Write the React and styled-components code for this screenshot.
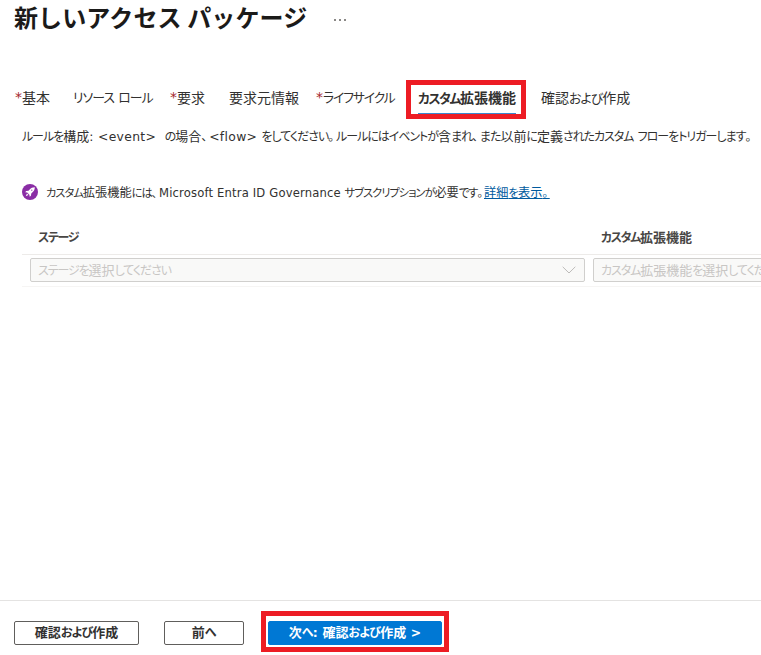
import styled, { createGlobalStyle } from "styled-components";

const GlobalStyle = createGlobalStyle`
  * {
    box-sizing: border-box;
  }
  body {
    margin: 0;
    background: #fff;
    color: #323130;
    font-family: "DejaVu Sans", "Noto Sans CJK JP", sans-serif;
    overflow: hidden;
  }
`;

// kana are set smaller and tighter than kanji, like in the Windows UI fonts
const UiText = ({ children, kana = -0.07, latin = -0.02 }) =>
  children
    .split(/([ぁ-ヿ]+|[、。]|[ -~]+)/)
    .filter(Boolean)
    .map((part, i) => {
      if (/^[ぁ-ヿ]/.test(part)) {
        return (
          <Kana key={i} $gap={kana}>
            {part}
          </Kana>
        );
      }
      if (/^[、。]/.test(part)) {
        return (
          <Kana key={i} $gap={0.16}>
            {part}
          </Kana>
        );
      }
      if (/^[ -~]/.test(part)) {
        return (
          <Latin key={i} $gap={latin}>
            {part}
          </Latin>
        );
      }
      return <Kanji key={i}>{part}</Kanji>;
    });

const tabs = [
  { label: "基本", required: true, width: 58 },
  { label: "リソース ロール", width: 97, kana: -0.07 },
  { label: "要求", required: true, width: 59 },
  { label: "要求元情報", width: 87 },
  { label: "ライフサイクル", required: true, width: 90, kana: -0.09 },
  { label: "カスタム拡張機能", active: true, width: 135, kana: -0.11 },
  { label: "確認および作成", width: 92, kana: -0.07 },
];

const Rocket = () => (
  <svg width="16" height="16" viewBox="0 0 16 16">
    <circle cx="8" cy="8" r="8" fill="#8a2da5" />
    <path
      d="M12.8 3.2C10.6 3.2 9 4 7.7 5.5L6.5 6.7 4.2 7.1 3.2 8.3 5.2 8.6 7.4 10.8 7.7 12.8 8.9 11.8 9.3 9.5 10.5 8.3C12 7 12.8 5.4 12.8 3.2ZM5 9.6 3.7 12.3 6.4 11Z"
      fill="#fff"
    />
    <circle cx="9.8" cy="6.2" r="0.6" fill="#8a2da5" />
  </svg>
);

const Chevron = () => (
  <svg width="14" height="8" viewBox="0 0 14 8">
    <path d="M0.7 0.8 7 7 13.3 0.8" fill="none" stroke="#bdbbb9" />
  </svg>
);

export default function App() {
  return (
    <Page>
      <GlobalStyle />
      <Header>
        <Title>新しいアクセス パッケージ</Title>
        <More>
          <i />
          <i />
          <i />
        </More>
      </Header>
      <Tabs>
        {tabs.map((tab) => (
          <Tab key={tab.label} $width={tab.width} $active={tab.active}>
            {tab.required && <Star>*</Star>}
            <TabLabel $active={tab.active}>
              <UiText kana={tab.kana}>{tab.label}</UiText>
            </TabLabel>
            {tab.active && <TabMark />}
          </Tab>
        ))}
      </Tabs>
      <Description>
        <UiText kana={-0.083} latin={0.027}>
          {"ルールを構成: <event>  の場合、<flow> をしてください。ルールにはイベントが含まれ、また以前に定義されたカスタム フローをトリガーします。"}
        </UiText>
      </Description>
      <Notice>
        <Rocket />
        <NoticeText>
          <UiText kana={-0.088} latin={0.014}>
            カスタム拡張機能には、Microsoft Entra ID Governance サブスクリプションが必要です。
          </UiText>
        </NoticeText>
        <Link href="#">
          <UiText>詳細を表示。</UiText>
        </Link>
      </Notice>
      <Table>
        <HeadRow>
          <HeadCell>
            <UiText kana={-0.11}>ステージ</UiText>
          </HeadCell>
          <HeadCell>
            <UiText kana={-0.11}>カスタム拡張機能</UiText>
          </HeadCell>
        </HeadRow>
        <Row>
          <Select>
            <Placeholder>
              <UiText kana={-0.088}>ステージを選択してください</UiText>
            </Placeholder>
            <Chevron />
          </Select>
          <Select>
            <Placeholder>
              <UiText kana={-0.088}>カスタム拡張機能を選択してください</UiText>
            </Placeholder>
            <Chevron />
          </Select>
        </Row>
      </Table>
      <Footer>
        <Button $width={125}>
          <UiText>確認および作成</UiText>
        </Button>
        <Button $width={80}>
          <UiText kana={-0.01}>前へ</UiText>
        </Button>
        <Highlight>
          <Button $width={174} $primary>
            <UiText kana={-0.06} latin={0.02}>
              {"次へ: 確認および作成 >"}
            </UiText>
          </Button>
        </Highlight>
      </Footer>
    </Page>
  );
}

const Page = styled.div`
  display: flex;
  flex-direction: column;
  width: 761px;
  height: 655px;
  overflow: hidden;
`;
const Kana = styled.span`
  font-family: "Noto Sans CJK JP", sans-serif;
  font-size: 0.92em;
  font-feature-settings: "palt";
  letter-spacing: ${(p) => p.$gap}em;
`;
const Kanji = styled.span`
  font-family: "Noto Sans CJK JP", sans-serif;
`;
const Latin = styled.span`
  font-family: "DejaVu Sans", sans-serif;
  font-size: 0.95em;
  letter-spacing: ${(p) => p.$gap}em;
`;
const Header = styled.header`
  display: flex;
  align-items: center;
  height: 36px;
  padding-left: 14px;
`;
const Title = styled.h1`
  margin: 0;
  width: 320px;
  color: #1b1a19;
  font: 700 24px/34px "Noto Sans CJK JP", sans-serif;
  letter-spacing: 0.12px;
  height: 36px;
  white-space: nowrap;
`;
const More = styled.div`
  display: flex;
  gap: 3px;
  padding-top: 3px;
  i {
    width: 2px;
    height: 2px;
    background: #8a8886;
  }
`;
const Tabs = styled.nav`
  display: flex;
  height: 39px;
  margin: 44px 0 0 15px;
`;
const Tab = styled.div`
  position: relative;
  display: flex;
  flex: none;
  width: ${(p) => p.$width}px;
  padding-left: ${(p) => (p.$active ? 12 : 0)}px;
  font-size: 14px;
  line-height: 34px;
  white-space: pre;
`;
const Star = styled.span`
  width: 7px;
  color: #a4262c;
`;
const TabLabel = styled.span`
  height: 35px;
  font-weight: ${(p) => (p.$active ? 700 : 400)};
  border-bottom: ${(p) => (p.$active ? "2px solid #3a86cf" : "none")};
`;
const TabMark = styled.span`
  position: absolute;
  inset: 0 15px 0 0;
  border: 5px solid #ed1c24;
`;
const Description = styled.p`
  margin: 7px 0 0 22px;
  font-size: 13px;
  line-height: 20px;
  white-space: pre;
`;
const Notice = styled.div`
  display: flex;
  align-items: center;
  height: 20px;
  margin: 35px 0 0 22px;
  font-size: 12.2px;
  line-height: 20px;
  white-space: pre;
`;
const NoticeText = styled.span`
  width: 438px;
  margin-left: 8px;
  padding-top: 1px;
`;
const Link = styled.a`
  color: #005a9e;
  text-decoration: underline;
`;
const Table = styled.section`
  margin: 18px 0 0 22px;
  width: 900px;
`;
const HeadRow = styled.div`
  display: grid;
  grid-template-columns: 563px 1fr;
  height: 35px;
  padding-left: 16px;
  border-bottom: 1px solid #edebe9;
`;
const HeadCell = styled.div`
  font-size: 13px;
  font-weight: 700;
  line-height: 33px;
  color: #484644;
`;
const Row = styled.div`
  display: grid;
  grid-template-columns: 555px 555px;
  gap: 8px;
  padding: 3px 0 4px 8px;
  border-bottom: 1px solid #f6f5f4;
`;
const Select = styled.div`
  display: flex;
  align-items: center;
  justify-content: space-between;
  height: 24px;
  padding: 0 8px 0 7px;
  background: #f9f9f8;
  border: 1px solid #d0cfcd;
  border-radius: 2px;
`;
const Placeholder = styled.span`
  font-size: 13px;
  line-height: 22px;
  color: #c8c6c4;
  white-space: nowrap;
`;
const Footer = styled.footer`
  display: flex;
  align-items: flex-start;
  height: 55px;
  margin-top: auto;
  padding: 20px 0 0 14px;
  border-top: 1px solid #e4e3e2;
`;
const Button = styled.button`
  width: ${(p) => p.$width}px;
  height: 24px;
  margin-right: ${(p) => (p.$primary ? 0 : 25)}px;
  padding: 0 0 2px;
  font-size: 13px;
  font-weight: 700;
  line-height: 20px;
  white-space: pre;
  color: ${(p) => (p.$primary ? "#fff" : "#323130")};
  background: ${(p) => (p.$primary ? "#0078d4" : "#fff")};
  border: 1px solid ${(p) => (p.$primary ? "#0078d4" : "#605e5c")};
  border-radius: 2px;
`;
const Highlight = styled.div`
  display: flex;
  width: 188px;
  height: 41px;
  margin: -10px 0 0 -8px;
  padding: 5px 2px;
  border: 5px solid #ed1c24;
`;
